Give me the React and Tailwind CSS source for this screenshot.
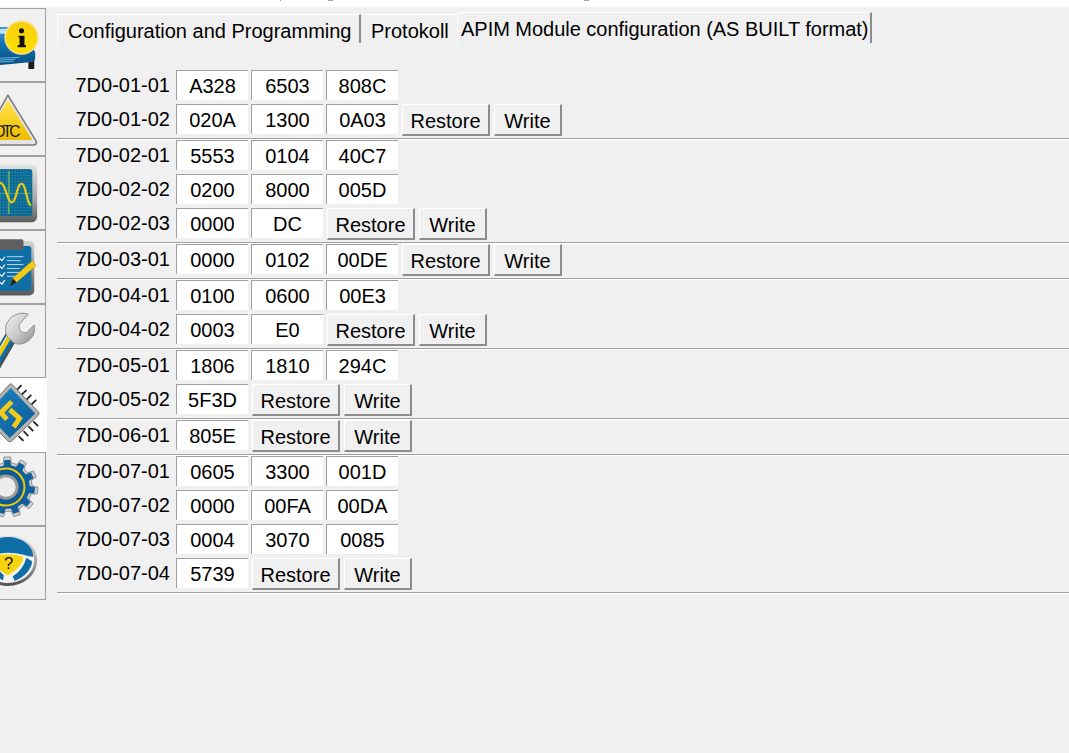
import React from 'react'

const groups = [
  [
    { id: '7D0-01-01', cells: ['A328', '6503', '808C'] },
    { id: '7D0-01-02', cells: ['020A', '1300', '0A03'], actions: true },
  ],
  [
    { id: '7D0-02-01', cells: ['5553', '0104', '40C7'] },
    { id: '7D0-02-02', cells: ['0200', '8000', '005D'] },
    { id: '7D0-02-03', cells: ['0000', 'DC'], actions: true },
  ],
  [{ id: '7D0-03-01', cells: ['0000', '0102', '00DE'], actions: true }],
  [
    { id: '7D0-04-01', cells: ['0100', '0600', '00E3'] },
    { id: '7D0-04-02', cells: ['0003', 'E0'], actions: true },
  ],
  [
    { id: '7D0-05-01', cells: ['1806', '1810', '294C'] },
    { id: '7D0-05-02', cells: ['5F3D'], actions: true },
  ],
  [{ id: '7D0-06-01', cells: ['805E'], actions: true }],
  [
    { id: '7D0-07-01', cells: ['0605', '3300', '001D'] },
    { id: '7D0-07-02', cells: ['0000', '00FA', '00DA'] },
    { id: '7D0-07-03', cells: ['0004', '3070', '0085'] },
    { id: '7D0-07-04', cells: ['5739'], actions: true },
  ],
]

function gearPath(cx, cy, teeth, outer, inner) {
  const pts = []
  const step = (Math.PI * 2) / teeth
  for (let i = 0; i < teeth; i++) {
    const a = i * step + 0.12
    const list = [
      [inner, a - step * 0.3],
      [outer, a - step * 0.19],
      [outer, a + step * 0.19],
      [inner, a + step * 0.3],
    ]
    list.forEach(([r, t]) => pts.push(`${(cx + r * Math.cos(t)).toFixed(1)},${(cy + r * Math.sin(t)).toFixed(1)}`))
  }
  return pts.join(' ')
}

function InfoIcon() {
  return (
    <svg viewBox="0 8 46 74" className="block w-[45px] h-[73px]">
      <defs>
        <linearGradient id="bookBlue" x1="0" y1="0" x2="0" y2="1">
          <stop offset="0" stopColor="#3d9ad6" />
          <stop offset="0.5" stopColor="#0f6fae" />
          <stop offset="1" stopColor="#0b4f84" />
        </linearGradient>
        <linearGradient id="infoYellow" x1="0" y1="0" x2="0" y2="1">
          <stop offset="0" stopColor="#f6cf10" />
          <stop offset="1" stopColor="#ffdf00" />
        </linearGradient>
      </defs>
      <rect x="29" y="56" width="6" height="13" fill="#1c1c1c" />
      <path d="M0 26 H20 L36 52 V58 Q36 62 30 62 L0 65 Z" fill="url(#bookBlue)" />
      <path d="M0 28 H8 V33 H0 Z" fill="#bfe0f2" />
      <path d="M0 58 L20 57 M0 60 L16 59 M0 62 L14 61" stroke="#6db3dd" strokeWidth="1" />
      <circle cx="22" cy="37" r="17.5" fill="#fde28a" />
      <circle cx="22" cy="37" r="16" fill="url(#infoYellow)" />
      <circle cx="22" cy="30" r="2.6" fill="#111" />
      <path d="M19 35 H25 V44.5 H26.5 V46.8 H18 V44.5 H20 V37 H19 Z" fill="#111" />
    </svg>
  )
}

function DtcIcon() {
  return (
    <svg viewBox="0 82 46 74" className="block w-[45px] h-[73px]">
      <defs>
        <linearGradient id="dtcYellow" x1="0" y1="0" x2="0" y2="1">
          <stop offset="0" stopColor="#ffe64a" />
          <stop offset="1" stopColor="#eebb00" />
        </linearGradient>
      </defs>
      <path d="M8 94 L37 141 Q38 145 34 145 H-20 L8 94 Z" fill="#e4e4e4" stroke="#777" strokeWidth="1.5" strokeLinejoin="round" />
      <path d="M8 99 L33 140 H-16 Z" fill="url(#dtcYellow)" />
      <text x="-6" y="137" fontFamily="'Liberation Sans', sans-serif" fontSize="16" fill="#1a1a1a" textLength="27">DTC</text>
    </svg>
  )
}

function ScopeIcon() {
  return (
    <svg viewBox="0 156 46 74" className="block w-[45px] h-[73px]">
      <defs>
        <linearGradient id="scopeFrame" x1="0" y1="0" x2="0" y2="1">
          <stop offset="0" stopColor="#e2e2e2" />
          <stop offset="0.6" stopColor="#a8a8a8" />
          <stop offset="1" stopColor="#5a5a5a" />
        </linearGradient>
        <pattern id="scopeDots" width="3" height="3" patternUnits="userSpaceOnUse">
          <rect width="1" height="1" fill="#3d9ab0" />
        </pattern>
      </defs>
      <rect x="-12" y="163.5" width="50" height="59" rx="6" fill="url(#scopeFrame)" />
      <rect x="-12" y="168" width="45" height="48" rx="3" fill="#0c6a94" />
      <rect x="-12" y="168" width="45" height="48" rx="3" fill="url(#scopeDots)" />
      <path d="M9 170 V214" stroke="#5ca96c" strokeWidth="2" />
      <path d="M-10 193 H32" stroke="#4f9f8a" strokeWidth="1" />
      <path d="M0 182 C6 182 7 202 12 202 C17 202 17 183 22 183 C27 183 27 205 32 205" fill="none" stroke="#efc90e" strokeWidth="2.2" />
    </svg>
  )
}

function ChecklistIcon() {
  return (
    <svg viewBox="0 230 46 74" className="block w-[45px] h-[73px]">
      <defs>
        <linearGradient id="clipFrame" x1="0" y1="0" x2="0" y2="1">
          <stop offset="0" stopColor="#d4d4d4" />
          <stop offset="1" stopColor="#5a5a5a" />
        </linearGradient>
      </defs>
      <rect x="-12" y="240" width="47" height="55.5" rx="5" fill="url(#clipFrame)" />
      <rect x="-12" y="245" width="44" height="46" rx="3" fill="#0f6ea6" />
      <rect x="-8" y="238" width="32" height="11" rx="2" fill="#5f5f5f" />
      <path d="M7 256 H24 M7 260 H21 M7 264 H24 M7 268 H20 M7 272 H22 M7 276 H18" stroke="#b9dcf0" strokeWidth="1" />
      <path d="M0 258 L2 260 L5 256 M0 266 L2 268 L5 264 M0 274 L2 276 L5 272 M0 282 L2 284 L5 280" fill="none" stroke="#fff" strokeWidth="1.2" />
      <path d="M33 260 L37 265 L17 282 L11 284 L13 278 Z" fill="#f3cb1a" stroke="#b08d00" strokeWidth="0.5" />
      <path d="M13 278 L17 282 L10 286 Z" fill="#222" />
    </svg>
  )
}

function WrenchIcon() {
  return (
    <svg viewBox="0 304 46 74" className="block w-[45px] h-[73px]">
      <defs>
        <linearGradient id="wrenchHead" x1="0" y1="0" x2="1" y2="1">
          <stop offset="0" stopColor="#f2f2f2" />
          <stop offset="0.55" stopColor="#c8c8c8" />
          <stop offset="1" stopColor="#8a8a8a" />
        </linearGradient>
      </defs>
      <path d="M12 335 L-6 366" stroke="#45525a" strokeWidth="13" />
      <path d="M11 335 L-6 364" stroke="#0f6ea6" strokeWidth="10" />
      <path d="M10 335 L-6 362" stroke="#ecc911" strokeWidth="5" />
      <path d="M8 334 L-5 356" stroke="#f4f4f4" strokeWidth="1" />
      <path d="M29 313 C19 310 9 315 6 325 C5 330 6 334 8 337 L15 343 C22 345 29 342 33 336 C35 333 36 329 35 324 L28 331 C26 333 23 332 21 330 C19 327 19 324 21 322 Z" fill="url(#wrenchHead)" stroke="#8f8f8f" strokeWidth="1" strokeLinejoin="round" />
    </svg>
  )
}

function ChipIcon() {
  return (
    <svg viewBox="0 380 46 74" className="block w-[45px] h-[73px]">
      <defs>
        <linearGradient id="chipBlue" x1="0" y1="0" x2="1" y2="1">
          <stop offset="0" stopColor="#1d86c4" />
          <stop offset="1" stopColor="#0b5a92" />
        </linearGradient>
      </defs>
      <path d="M17 392 L22 387 M22 397 L27 392 M27 402 L32 397 M32 407 L37 402 M34 424 L39 429 M29 429 L34 434 M24 434 L29 439 M19 439 L24 444" stroke="#222" strokeWidth="1.8" />
      <path d="M12 386 L39 414 Q41 416 39 418 L12 444 Q10 446 8 444 L-18 417 L10 386 Q11 385 12 386 Z" fill="#b4b4b4" stroke="#6e6e6e" strokeWidth="1" />
      <path d="M11 390 L36 416 L10 441 L-14 416 Z" fill="url(#chipBlue)" />
      <path d="M12 404 L1 415 L7 422" fill="none" stroke="#f3cb1a" strokeWidth="5" />
      <path d="M10 412 L20 421 L14 430" fill="none" stroke="#f3cb1a" strokeWidth="5" />
    </svg>
  )
}

function GearIcon() {
  return (
    <svg viewBox="0 454 46 74" className="block w-[45px] h-[72px]">
      <polygon points={gearPath(8, 489, 11, 31, 25)} fill="#cfcfcf" stroke="#8d8d8d" strokeWidth="1" strokeLinejoin="round" />
      <polygon points={gearPath(8, 489, 11, 28, 22.5)} fill="#11609c" />
      <circle cx="6" cy="489" r="21" fill="#0e5a93" />
      <circle cx="6" cy="489" r="19" fill="none" stroke="#efc90e" strokeWidth="2" />
      <circle cx="6" cy="489" r="13" fill="#9a9a9a" />
      <circle cx="6" cy="489" r="10" fill="#ececec" />
    </svg>
  )
}

function WheelIcon() {
  return (
    <svg viewBox="0 527 46 74" className="block w-[45px] h-[73px]">
      <defs>
        <linearGradient id="wheelRim" x1="0" y1="0" x2="0" y2="1">
          <stop offset="0" stopColor="#e6e6e6" />
          <stop offset="0.6" stopColor="#9a9a9a" />
          <stop offset="1" stopColor="#4f4f4f" />
        </linearGradient>
      </defs>
      <ellipse cx="8" cy="561" rx="30" ry="26" fill="url(#wheelRim)" />
      <ellipse cx="8" cy="561" rx="27" ry="23" fill="#f2f2f2" />
      <path d="M-18 557 A26 20 0 0 1 34 557 Q30 557 24 555 Q8 551 -6 555 Q-12 556 -18 557 Z" fill="#0f6ea6" />
      <path d="M33 562 Q31 575 15 582 L13 577 Q24 570 27 558 Z" fill="#0f6ea6" />
      <path d="M-14 562 Q-12 574 3 581 L4 576 Q-3 570 -8 560 Z" fill="#0f6ea6" />
      <path d="M-8 557 Q9 552 24 557 Q23 568 8 576 Q-6 569 -8 557 Z" fill="#f7d40c" />
      <text x="4" y="570" fontFamily="'Liberation Sans', sans-serif" fontSize="17" fill="#111">?</text>
    </svg>
  )
}

const tools = [
  { icon: InfoIcon },
  { icon: DtcIcon },
  { icon: ScopeIcon },
  { icon: ChecklistIcon },
  { icon: WrenchIcon },
  { icon: ChipIcon, active: true },
  { icon: GearIcon },
  { icon: WheelIcon },
]

function Row({ id, cells, actions }) {
  return (
    <div className="flex items-start h-[30px]">
      <div className="w-[119px] h-[30px] pr-[6px] text-right leading-[31px]">{id}</div>
      <div className="flex gap-[3px]">
        {cells.map((c, i) => (
          <div
            key={i}
            className="w-[72px] h-[30px] bg-white border-t border-l border-[#a0a0a0] text-center leading-[31px]"
          >
            {c}
          </div>
        ))}
      </div>
      {actions && (
        <div className="flex gap-[4px] ml-[4px]">
          <button className="w-[88px] h-[32px] pt-[2px] bg-[#f0f0f0] border-t border-l border-white border-r-2 border-b-2 border-r-[#8c8c8c] border-b-[#8c8c8c] leading-[28px]">
            Restore
          </button>
          <button className="w-[68px] h-[32px] pt-[2px] bg-[#f0f0f0] border-t border-l border-white border-r-2 border-b-2 border-r-[#8c8c8c] border-b-[#8c8c8c] leading-[28px]">
            Write
          </button>
        </div>
      )}
    </div>
  )
}

export default function App() {
  return (
    <div className="w-[1069px] h-[753px] overflow-hidden bg-[#f0f0f0] text-[20px] text-black font-['Liberation_Sans',sans-serif]">
      <div className="flex h-[7px] bg-white">
        <div className="w-px h-px ml-[280px] bg-[#a0a0a0]" />
        <div className="w-[5px] h-px ml-[47px] bg-[#a0a0a0]" />
        <div className="w-[5px] h-px ml-[251px] bg-[#a0a0a0]" />
      </div>
      <div className="flex">
        <div className="w-[46px] shrink-0 pt-px">
          {tools.map((t, i) => {
            const Icon = t.icon
            return (
              <div
                key={i}
                className={
                  t.active
                    ? 'h-[74px] w-[47px] bg-white overflow-hidden'
                    : 'h-[74px] w-[46px] bg-[#f0f0f0] border-t border-r border-b border-[#a0a0a0] overflow-hidden'
                }
              >
                <Icon />
              </div>
            )
          })}
        </div>
        <div className="flex-1 pl-[11px]">
          <div className="flex items-start h-[63px] pt-[5px] whitespace-nowrap">
            <div className="w-[304px] h-[29px] mt-[2px] pl-[10px] border-t border-l border-white border-r-2 border-r-[#8c8c8c] leading-[32px]">
              Configuration and Programming
            </div>
            <div className="w-[97px] h-[29px] mt-[2px] pl-[10px] border-t border-r border-white leading-[32px]">
              Protokoll
            </div>
            <div className="w-[414px] h-[31px] pl-[3px] border-t border-white border-r-2 border-r-[#8c8c8c] leading-[32px] tracking-[-0.02px]">
              APIM Module configuration (AS BUILT format)
            </div>
          </div>
          {groups.map((rows, i) => (
            <div key={i}>
              <div className="flex flex-col gap-[4px] pb-[4px]">
                {rows.map((r) => (
                  <Row key={r.id} {...r} />
                ))}
              </div>
              <div className="h-[2px] border-t border-[#a0a0a0] border-b border-b-white" />
            </div>
          ))}
        </div>
      </div>
    </div>
  )
}
